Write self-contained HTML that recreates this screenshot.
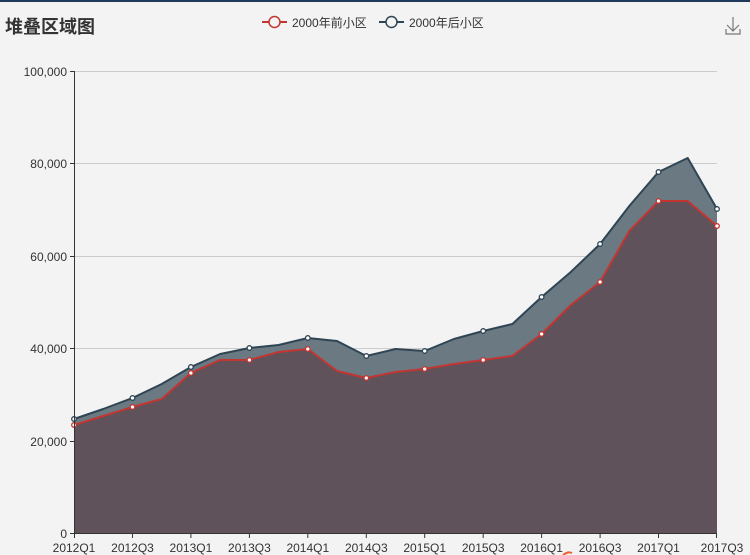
<!DOCTYPE html>
<html><head><meta charset="utf-8"><style>
html,body{margin:0;padding:0;background:#f3f3f3;}
body{width:750px;height:555px;overflow:hidden;position:relative;font-family:"Liberation Sans","Noto Sans CJK SC",sans-serif;}
</style></head><body>
<svg width="750" height="555" viewBox="0 0 750 555" xmlns="http://www.w3.org/2000/svg" style="position:absolute;left:0;top:0">
<rect x="0" y="0" width="750" height="2" fill="#1f3a5a"/>
<text x="5" y="33" font-size="18" font-weight="bold" fill="#333" font-family="'Noto Sans CJK SC',sans-serif">堆叠区域图</text>
<!-- legend -->
<line x1="262" y1="22" x2="287" y2="22" stroke="#c23531" stroke-width="2"/>
<circle cx="274.5" cy="22" r="5.5" fill="#f3f3f3" stroke="#c23531" stroke-width="1.5"/>
<text x="292" y="27" font-size="12" fill="#333" font-family="'Liberation Sans','Noto Sans CJK SC',sans-serif">2000年前小区</text>
<line x1="379" y1="22" x2="404" y2="22" stroke="#2f4554" stroke-width="2"/>
<circle cx="391.5" cy="22" r="5.5" fill="#f3f3f3" stroke="#2f4554" stroke-width="1.5"/>
<text x="409" y="27" font-size="12" fill="#333" font-family="'Liberation Sans','Noto Sans CJK SC',sans-serif">2000年后小区</text>
<!-- download icon -->
<g stroke="#777" stroke-width="1.2" fill="none">
<path d="M733 17 V31 M727 25 L733 31 L739 25"/>
<path d="M726 29 V34 H740 V29"/>
</g>
<!-- grid -->
<g stroke="#ccc" stroke-width="1">
<line x1="74" y1="71.5" x2="717" y2="71.5"/>
<line x1="74" y1="163.5" x2="717" y2="163.5"/>
<line x1="74" y1="256.5" x2="717" y2="256.5"/>
<line x1="74" y1="348.5" x2="717" y2="348.5"/>
<line x1="74" y1="441.5" x2="717" y2="441.5"/>
</g>
<!-- areas -->
<polygon fill="#6b7983" points="74,419 103.2,409 132.5,398 161.7,384 190.9,367 220.1,354 249.4,348 278.6,345 307.8,338 337,341 366.3,356 395.5,349 424.7,351 453.9,339 483.2,331 512.4,324 541.6,297 570.8,272 600.1,244 629.3,206 658.5,172 687.7,158 717,209 717,226 687.7,201 658.5,201 629.3,231 600.1,282 570.8,305 541.6,334 512.4,356 483.2,360 453.9,364 424.7,369 395.5,372 366.3,378 337,371 307.8,349 278.6,352 249.4,360 220.1,360 190.9,373 161.7,399 132.5,407 103.2,416 74,425"/>
<polygon fill="#5f525b" points="74,425 103.2,416 132.5,407 161.7,399 190.9,373 220.1,360 249.4,360 278.6,352 307.8,349 337,371 366.3,378 395.5,372 424.7,369 453.9,364 483.2,360 512.4,356 541.6,334 570.8,305 600.1,282 629.3,231 658.5,201 687.7,201 717,226 717,533 74,533"/>
<polyline fill="none" stroke="#2f4554" stroke-width="2" stroke-linejoin="round" points="74,419 103.2,409 132.5,398 161.7,384 190.9,367 220.1,354 249.4,348 278.6,345 307.8,338 337,341 366.3,356 395.5,349 424.7,351 453.9,339 483.2,331 512.4,324 541.6,297 570.8,272 600.1,244 629.3,206 658.5,172 687.7,158 717,209"/>
<polyline fill="none" stroke="#c23531" stroke-width="2" stroke-linejoin="round" points="74,425 103.2,416 132.5,407 161.7,399 190.9,373 220.1,360 249.4,360 278.6,352 307.8,349 337,371 366.3,378 395.5,372 424.7,369 453.9,364 483.2,360 512.4,356 541.6,334 570.8,305 600.1,282 629.3,231 658.5,201 687.7,201 717,226"/>
<g fill="#fff" stroke="#2f4554" stroke-width="1.3">
<circle cx="74" cy="419" r="2.3"/><circle cx="132.5" cy="398" r="2.3"/><circle cx="190.9" cy="367" r="2.3"/><circle cx="249.4" cy="348" r="2.3"/><circle cx="307.8" cy="338" r="2.3"/><circle cx="366.3" cy="356" r="2.3"/><circle cx="424.7" cy="351" r="2.3"/><circle cx="483.2" cy="331" r="2.3"/><circle cx="541.6" cy="297" r="2.3"/><circle cx="600.1" cy="244" r="2.3"/><circle cx="658.5" cy="172" r="2.3"/><circle cx="717" cy="209" r="2.3"/>
</g>
<g fill="#fff" stroke="#c23531" stroke-width="1.3">
<circle cx="74" cy="425" r="2.3"/><circle cx="132.5" cy="407" r="2.3"/><circle cx="190.9" cy="373" r="2.3"/><circle cx="249.4" cy="360" r="2.3"/><circle cx="307.8" cy="349" r="2.3"/><circle cx="366.3" cy="378" r="2.3"/><circle cx="424.7" cy="369" r="2.3"/><circle cx="483.2" cy="360" r="2.3"/><circle cx="541.6" cy="334" r="2.3"/><circle cx="600.1" cy="282" r="2.3"/><circle cx="658.5" cy="201" r="2.3"/><circle cx="717" cy="226" r="2.3"/>
</g>
<!-- axes -->
<g stroke="#333" stroke-width="1">
<line x1="74.5" y1="71" x2="74.5" y2="533"/>
<line x1="74" y1="533.5" x2="717" y2="533.5"/>
<line x1="70" y1="71.5" x2="74" y2="71.5"/><line x1="70" y1="163.5" x2="74" y2="163.5"/><line x1="70" y1="256.5" x2="74" y2="256.5"/><line x1="70" y1="348.5" x2="74" y2="348.5"/><line x1="70" y1="441.5" x2="74" y2="441.5"/><line x1="70" y1="533.5" x2="74" y2="533.5"/>
<line x1="74.5" y1="533" x2="74.5" y2="538"/><line x1="132.5" y1="533" x2="132.5" y2="538"/><line x1="190.9" y1="533" x2="190.9" y2="538"/><line x1="249.4" y1="533" x2="249.4" y2="538"/><line x1="307.8" y1="533" x2="307.8" y2="538"/><line x1="366.3" y1="533" x2="366.3" y2="538"/><line x1="424.7" y1="533" x2="424.7" y2="538"/><line x1="483.2" y1="533" x2="483.2" y2="538"/><line x1="541.6" y1="533" x2="541.6" y2="538"/><line x1="600.1" y1="533" x2="600.1" y2="538"/><line x1="658.5" y1="533" x2="658.5" y2="538"/><line x1="716.5" y1="533" x2="716.5" y2="538"/>
</g>
<g font-size="12" fill="#333" text-anchor="end" font-family="'Liberation Sans',sans-serif">
<text x="67" y="76">100,000</text><text x="67" y="168">80,000</text><text x="67" y="261">60,000</text><text x="67" y="353">40,000</text><text x="67" y="446">20,000</text><text x="67" y="538">0</text>
</g>
<g font-size="12" fill="#333" text-anchor="middle" font-family="'Liberation Sans',sans-serif">
<text x="74" y="552">2012Q1</text><text x="132.5" y="552">2012Q3</text><text x="190.9" y="552">2013Q1</text><text x="249.4" y="552">2013Q3</text><text x="307.8" y="552">2014Q1</text><text x="366.3" y="552">2014Q3</text><text x="424.7" y="552">2015Q1</text><text x="483.2" y="552">2015Q3</text><text x="541.6" y="552">2016Q1</text><text x="600.1" y="552">2016Q3</text><text x="658.5" y="552">2017Q1</text><text x="722" y="552">2017Q3</text>
</g>
<path d="M563 555 Q568 551 572 553" stroke="#e8602c" stroke-width="2" fill="none"/>
</svg>
</body></html>
